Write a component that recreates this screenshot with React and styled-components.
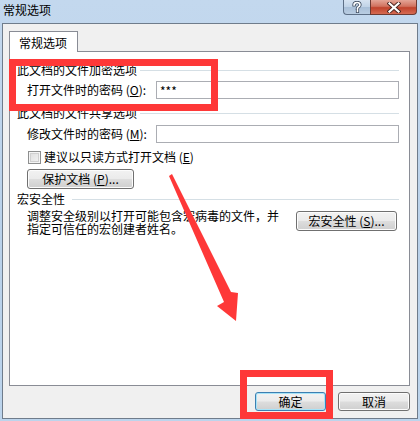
import React from "react";
import styled, { createGlobalStyle } from "styled-components";

const GlobalStyle = createGlobalStyle`
  html, body {
    margin: 0;
    padding: 0;
    background: #ffffff;
  }
  body {
    font-family: "Noto Sans CJK SC", "Noto Sans", sans-serif;
    font-size: 12px;
    color: #000;
  }
`;

const Frame = styled.div`
  position: relative;
  width: 420px;
  height: 421px;
  display: flex;
  flex-direction: column;
  background: linear-gradient(to bottom, #c3d8ee 0%, #b9d1ea 60%, #bcd4ec 100%);
  overflow: hidden;
`;

const TitleBar = styled.div`
  height: 23px;
  display: flex;
  align-items: flex-start;
  flex-shrink: 0;
`;

const Title = styled.div`
  padding: 2px 0 0 3px;
  font-size: 12px;
  line-height: 15px;
  color: #000;
`;

const CaptionButtons = styled.div`
  margin-left: auto;
  margin-right: 3px;
  display: flex;
`;

const HelpButton = styled.div`
  width: 27px;
  height: 15px;
  box-sizing: border-box;
  border: 1px solid #5d6f86;
  border-top: none;
  border-right: none;
  border-bottom-left-radius: 4px;
  background: linear-gradient(to bottom, #d6e3f1 0%, #c0d3e7 50%, #a8bfd8 51%, #b9cde2 100%);
  display: flex;
  align-items: center;
  justify-content: center;
`;

const CloseButton = styled.div`
  width: 47px;
  height: 15px;
  box-sizing: border-box;
  border: 1px solid #6e3a32;
  border-top: none;
  border-bottom-right-radius: 4px;
  background: linear-gradient(to bottom, #e4a597 0%, #d1725f 45%, #c0422c 55%, #d66b53 100%);
  display: flex;
  align-items: center;
  justify-content: center;
`;

const Client = styled.div`
  flex: 1;
  margin: 0 2px 2px 2px;
  border: 1px solid #6f7c8b;
  background: #f0f0f0;
  padding: 7px 7px 7px 6px;
  display: flex;
  flex-direction: column;
  min-height: 0;
`;

const TabStrip = styled.div`
  display: flex;
  position: relative;
  z-index: 1;
  margin-bottom: -1px;
`;

const Tab = styled.div`
  width: 69px;
  height: 21px;
  box-sizing: border-box;
  border: 1px solid #898c95;
  border-bottom: none;
  background: #ffffff;
  padding: 4px 0 0 9px;
  line-height: 13px;
`;

const Panel = styled.div`
  flex: 1;
  background: #ffffff;
  border: 1px solid #898c95;
  padding: 11px 10px 0 7px;
  display: flex;
  flex-direction: column;
`;

const GroupHeader = styled.div`
  display: flex;
  align-items: center;
  height: 14px;
  margin-top: ${(p) => p.$top}px;
  line-height: 14px;
  white-space: nowrap;
`;

const GroupLine = styled.div`
  flex: 1;
  height: 1px;
  margin-left: ${(p) => p.$gap}px;
  background: #d5dfe5;
`;

const FieldRow = styled.div`
  display: flex;
  align-items: center;
  margin-top: ${(p) => p.$top}px;
  padding-left: 10px;
`;

const FieldLabel = styled.div`
  width: 129px;
  line-height: 14px;
  white-space: nowrap;
`;

const TextBox = styled.div`
  flex: 1;
  height: 18px;
  box-sizing: border-box;
  border: 1px solid #abadb3;
  background: #ffffff;
  padding: 1px 0 0 3px;
  line-height: 15px;
  font-size: 12px;
`;

const CheckRow = styled.div`
  display: flex;
  align-items: center;
  height: 14px;
  margin-top: ${(p) => p.$top}px;
  padding-left: 11px;
`;

const CheckBox = styled.div`
  width: 13px;
  height: 13px;
  box-sizing: border-box;
  border: 1px solid #8e8f8f;
  background: linear-gradient(135deg, #dcdcdc 0%, #f4f4f4 100%);
  box-shadow: inset 0 0 0 1px #f4f4f4, inset 0 0 0 2px #d0d0d0;
  margin-right: 3px;
`;

const Label = styled.span`
  line-height: 14px;
  white-space: nowrap;
`;

const Button = styled.div`
  width: ${(p) => p.$w}px;
  height: ${(p) => p.$h}px;
  box-sizing: border-box;
  border: 1px solid ${(p) => (p.$default ? "#3c7fb1" : "#707070")};
  border-radius: 3px;
  background: linear-gradient(
    to bottom,
    #f2f2f2 0%,
    #ebebeb 48%,
    #dddddd 52%,
    #cfcfcf 100%
  );
  box-shadow: inset 0 0 0 1px ${(p) => (p.$default ? "#a6e3f8" : "#fcfcfc")};
  display: flex;
  align-items: center;
  justify-content: center;
  line-height: 14px;
  white-space: nowrap;
  flex-shrink: 0;
`;

const ProtectRow = styled.div`
  display: flex;
  margin-top: 5px;
  padding-left: 10px;
`;

const MacroRow = styled.div`
  display: flex;
  align-items: flex-start;
  margin-top: 3px;
  padding-left: 10px;
  padding-right: 2px;
`;

const MacroText = styled.div`
  flex: 1;
  line-height: 13px;
`;

const MacroButtonWrap = styled.div`
  margin-top: 2px;
`;

const ButtonBar = styled.div`
  display: flex;
  justify-content: flex-end;
  gap: 12px;
  margin-top: 6px;
`;

const RedBox = styled.div`
  position: absolute;
  left: ${(p) => p.$x}px;
  top: ${(p) => p.$y}px;
  width: ${(p) => p.$w}px;
  height: ${(p) => p.$h}px;
  box-sizing: border-box;
  border: 7px solid #fe3838;
  pointer-events: none;
`;

const ArrowLayer = styled.svg`
  position: absolute;
  left: 0;
  top: 0;
  pointer-events: none;
`;

const Key = ({ k }) => (
  <>
    (<u>{k}</u>)
  </>
);

export default function App() {
  return (
    <>
      <GlobalStyle />
      <Frame>
        <TitleBar>
          <Title>常规选项</Title>
          <CaptionButtons>
            <HelpButton>
              <svg width="10" height="12" viewBox="0 0 10 12">
                <path
                  d="M2 4 Q2 1.5 5 1.5 Q8 1.5 8 4 Q8 5.5 6 6.3 L5.5 7.6 M5.5 9.3 L5.5 10.5"
                  fill="none"
                  stroke="#3b4a5e"
                  strokeWidth="3.2"
                  strokeLinecap="square"
                />
                <path
                  d="M2 4 Q2 1.5 5 1.5 Q8 1.5 8 4 Q8 5.5 6 6.3 L5.5 7.6 M5.5 9.3 L5.5 10.5"
                  fill="none"
                  stroke="#ffffff"
                  strokeWidth="1.6"
                  strokeLinecap="square"
                />
              </svg>
            </HelpButton>
            <CloseButton>
              <svg width="14" height="11" viewBox="0 0 14 11">
                <path
                  d="M2.5 1.5 L11.5 9.5 M11.5 1.5 L2.5 9.5"
                  stroke="#4a2520"
                  strokeWidth="4"
                  strokeLinecap="square"
                />
                <path
                  d="M2.5 1.5 L11.5 9.5 M11.5 1.5 L2.5 9.5"
                  stroke="#ffffff"
                  strokeWidth="2.2"
                  strokeLinecap="square"
                />
              </svg>
            </CloseButton>
          </CaptionButtons>
        </TitleBar>

        <Client>
          <TabStrip>
            <Tab>常规选项</Tab>
          </TabStrip>
          <Panel>
            <GroupHeader $top={0}>
              此文档的文件加密选项
              <GroupLine $gap={3} />
            </GroupHeader>
            <FieldRow $top={4}>
              <FieldLabel>
                打开文件时的密码 <Key k="O" />:
              </FieldLabel>
              <TextBox>***</TextBox>
            </FieldRow>

            <GroupHeader $top={7}>
              此文档的文件共享选项
              <GroupLine $gap={3} />
            </GroupHeader>
            <FieldRow $top={5}>
              <FieldLabel>
                修改文件时的密码 <Key k="M" />:
              </FieldLabel>
              <TextBox />
            </FieldRow>

            <CheckRow $top={7}>
              <CheckBox />
              <Label>
                建议以只读方式打开文档 <Key k="E" />
              </Label>
            </CheckRow>

            <ProtectRow>
              <Button $w={107} $h={20}>
                保护文档 <Key k="P" />...
              </Button>
            </ProtectRow>

            <GroupHeader $top={3}>
              宏安全性
              <GroupLine $gap={7} />
            </GroupHeader>
            <MacroRow>
              <MacroText>
                调整安全级别以打开可能包含宏病毒的文件，并
                <br />
                指定可信任的宏创建者姓名。
              </MacroText>
              <MacroButtonWrap>
                <Button $w={101} $h={20}>
                  宏安全性 <Key k="S" />...
                </Button>
              </MacroButtonWrap>
            </MacroRow>
          </Panel>
          <ButtonBar>
            <Button $w={71} $h={19} $default>
              确定
            </Button>
            <Button $w={72} $h={19}>
              取消
            </Button>
          </ButtonBar>
        </Client>

        <RedBox $x={9} $y={59} $w={209} $h={52} />
        <RedBox $x={240} $y={370} $w={93} $h={49} />
        <ArrowLayer width="420" height="421" viewBox="0 0 420 421">
          <polygon
            points="169,176 172,174 231,292 238,293 236,321 217,306 224,302"
            fill="#fe3838"
          />
        </ArrowLayer>
      </Frame>
    </>
  );
}
